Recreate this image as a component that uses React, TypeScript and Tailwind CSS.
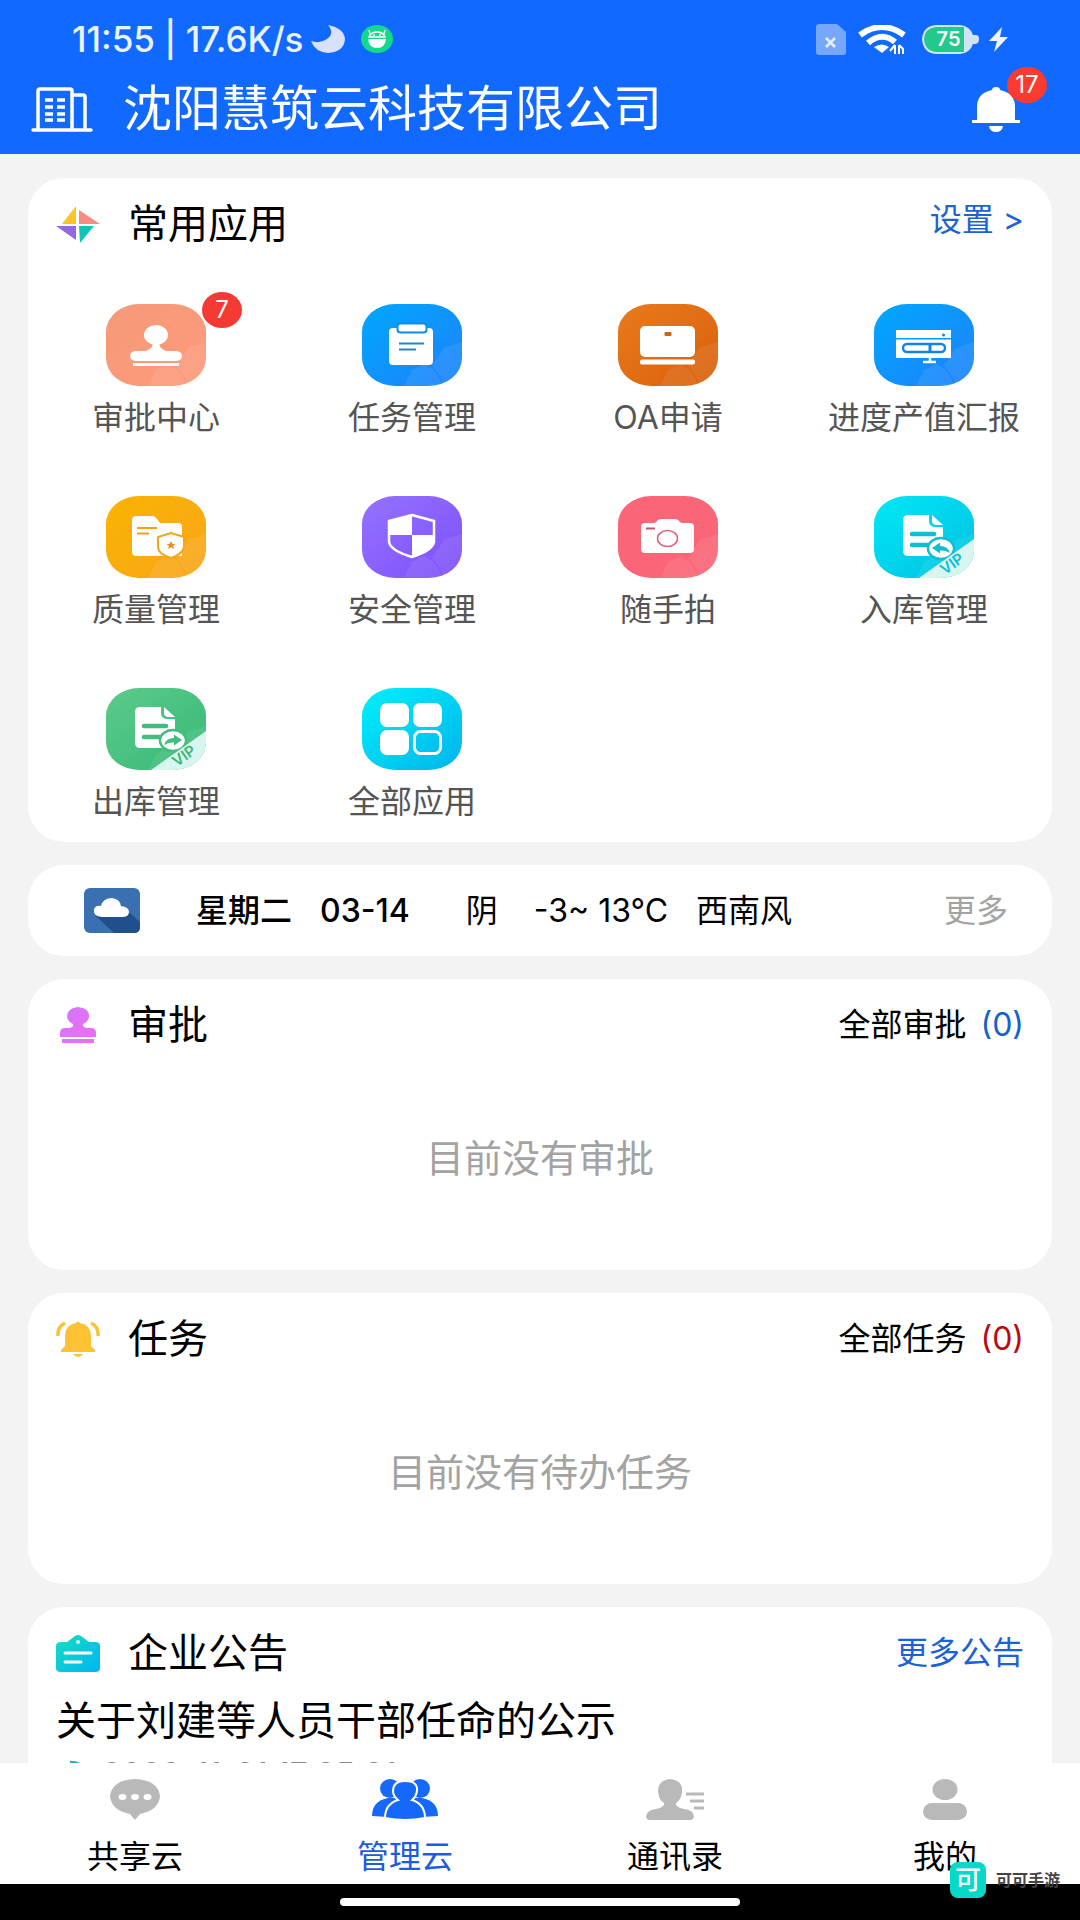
import type { ReactNode } from "react";

const FONT = "font-[Inter,'Noto_Sans_CJK_SC',sans-serif]";

interface AppItem {
  id: string;
  label: string;
  from: string;
  to: string;
  vip?: boolean;
  badge?: number;
  glyph: ReactNode;
}

const docGlyph = (color: string, arrow: string) => (
  <>
    <path d="M34 19H55V25Q55 31 62 31H69V60H34Q29 60 29 55V24Q29 19 34 19Z" fill="#fff" />
    <path d="M58 19L69 29H63Q58 29 58 25Z" fill="#fff" />
    <path d="M38 38H60M38 49H54" stroke={color} strokeWidth="4.500" strokeLinecap="round" />
    <ellipse cx="67" cy="52.500" rx="13" ry="10.500" fill="#fff" stroke={color} strokeWidth="2.500" />
    <path d={arrow} fill={color} />
  </>
);

const apps: AppItem[] = [
  {
    id: "approval",
    label: "审批中心",
    from: "#f59a78",
    to: "#ff9a7c",
    badge: 7,
    glyph: (
      <g fill="#fff">
        <ellipse cx="50" cy="31" rx="12" ry="10" />
        <path d="M46 38H54Q51 43 60 47H71Q76 48 76 52T71 57H29Q24 56 24 52T29 47H40Q49 43 46 38Z" />
        <rect x="27" y="59" width="46" height="3" />
      </g>
    ),
  },
  {
    id: "task",
    label: "任务管理",
    from: "#00a8fc",
    to: "#1f80fc",
    glyph: (
      <>
        <rect x="27" y="24" width="44" height="37" rx="4" fill="#fff" />
        <rect x="35.500" y="19.500" width="29" height="9" rx="3" fill="#fff" stroke="#0890e8" strokeWidth="2" />
        <path d="M37 39.500H62M37 45.500H54" stroke="#1c86d8" strokeWidth="2" />
      </>
    ),
  },
  {
    id: "oa",
    label: "OA申请",
    from: "#e97a1c",
    to: "#d9600c",
    glyph: (
      <>
        <rect x="22" y="22" width="55" height="31" rx="5" fill="#fff" />
        <rect x="46.500" y="28" width="7" height="4" rx="1" fill="#d9600c" />
        <rect x="22" y="55.500" width="55" height="5" rx="2" fill="#fff" />
      </>
    ),
  },
  {
    id: "progress",
    label: "进度产值汇报",
    from: "#00a8fc",
    to: "#1f80fc",
    glyph: (
      <>
        <rect x="22" y="26" width="55" height="8" fill="#fff" />
        <circle cx="69.500" cy="31" r="1.500" fill="#1684e0" />
        <rect x="22" y="35.500" width="55" height="18.500" fill="#fff" />
        <rect x="29" y="40" width="42" height="8" rx="4" fill="none" stroke="#1284e8" strokeWidth="2.500" />
        <path d="M56 40V48" stroke="#1284e8" strokeWidth="3" />
        <path d="M56 54V58M49 58H62" stroke="#fff" strokeWidth="2.500" />
      </>
    ),
  },
  {
    id: "quality",
    label: "质量管理",
    from: "#f9b400",
    to: "#f9a51c",
    glyph: (
      <>
        <path d="M30 20H46Q49 20 51 23L54 27H72Q76 27 76 31V60H30Q26 60 26 56V24Q26 20 30 20Z" fill="#fff" />
        <path d="M31 32H51M31 37.500H43" stroke="#f5a01c" strokeWidth="2" />
        <path d="M65 37L78 41V51Q77 58 65 62Q52 58 52 51V41Z" fill="#fff" stroke="#f0a818" strokeWidth="2" />
        <path d="M65 45L66.500 48H69.500L67 50L68 53L65 51.300L62 53L63 50L60.500 48H63.500Z" fill="#f28a1c" />
      </>
    ),
  },
  {
    id: "safety",
    label: "安全管理",
    from: "#9572ff",
    to: "#7d50fa",
    glyph: (
      <>
        <path d="M50 19L72 25V46Q70 55 50 61Q29 55 27 46V25Z" fill="none" stroke="#fff" strokeWidth="2.500" />
        <path d="M50 18V39H27V25ZM50 39H72V46Q70 55 50 61Z" fill="#fff" />
      </>
    ),
  },
  {
    id: "snapshot",
    label: "随手拍",
    from: "#fa6478",
    to: "#fa6878",
    glyph: (
      <>
        <path d="M27 27H34Q38 27 39 25Q40 23 44 23H56Q60 23 61 25Q62 27 66 27H72Q76 27 76 31V53Q76 57 72 57H27Q23 57 23 53V31Q23 27 27 27Z" fill="#fff" />
        <ellipse cx="49.500" cy="42.500" rx="10" ry="8" fill="none" stroke="#e0607a" strokeWidth="1.500" />
        <path d="M28 32.500H37" stroke="#c0566c" strokeWidth="2" />
      </>
    ),
  },
  {
    id: "inbound",
    label: "入库管理",
    from: "#00e8f6",
    to: "#02bfe0",
    vip: true,
    glyph: docGlyph("#10bed2", "M58 52L66 46.500V50Q74 50 76 57Q72 54 66 54.500V57.500Z"),
  },
  {
    id: "outbound",
    label: "出库管理",
    from: "#5bcb8a",
    to: "#38b877",
    vip: true,
    glyph: docGlyph("#43bd7f", "M76 52L68 46.500V50Q60 50 58 57Q62 54 68 54.500V57.500Z"),
  },
  {
    id: "all",
    label: "全部应用",
    from: "#00f0fc",
    to: "#00b4ea",
    glyph: (
      <g fill="#fff">
        <rect x="18" y="15" width="29" height="24" rx="7" />
        <rect x="51" y="15" width="29" height="24" rx="7" />
        <rect x="18" y="42" width="29" height="25" rx="7" />
        <rect x="52.500" y="43.500" width="26" height="22" rx="6" fill="none" stroke="#fff" strokeWidth="3" />
      </g>
    ),
  },
];

function AppTile({ app }: { app: AppItem }) {
  return (
    <svg viewBox="0 0 100 82" className="h-[82px] w-[100px]" aria-hidden="true">
      <defs>
        <linearGradient id={`bg-${app.id}`} x1="0" y1="0" x2="1" y2="1">
          <stop offset="0" stopColor={app.from} />
          <stop offset="1" stopColor={app.to} />
        </linearGradient>
        <clipPath id={`clip-${app.id}`}>
          <rect width="100" height="82" rx="33" ry="28" />
        </clipPath>
      </defs>
      <g clipPath={`url(#clip-${app.id})`}>
        <rect width="100" height="82" fill={`url(#bg-${app.id})`} />
        {app.id !== "all" && (
          <g fill="#fff" opacity="0.08">
            <path d="M42 82L50 66L62 60L72 66L82 82Z" />
            <path d="M70 62L82 44L100 38V72L86 80Z" />
            <path d="M72 62L90 72L82 80Z" />
          </g>
        )}
        {app.glyph}
        {app.vip && (
          <>
            <path d="M45 82L100 43V82Z" fill="#d8f5f0" />
            <text x="78" y="73" textAnchor="middle" fontSize="15" fontWeight="600" fill={app.to} transform="rotate(-35 78 68)">
              VIP
            </text>
          </>
        )}
      </g>
    </svg>
  );
}

function StatusBar() {
  return (
    <div className="flex h-[78px] items-center justify-between px-[72px]">
      <div className="flex items-center">
        <span className="text-[35px] leading-10 font-medium text-[#e8f3ff]">11:55 | 17.6K/s</span>
        <svg viewBox="0 0 34 28" className="ml-2 h-7 w-[34px]" aria-hidden="true">
          <path d="M17 0Q24 8 16 14Q9 19 0 16Q4 27 17 28Q33 27 34 14Q33 3 17 0Z" fill="#d8e0fb" />
        </svg>
        <svg viewBox="0 0 32 28" className="ml-4 h-7 w-8" aria-hidden="true">
          <ellipse cx="16" cy="14" rx="16" ry="14" fill="#12d98c" />
          <path d="M7 14H25Q24 23 16 23T7 14Z" fill="#fff" />
          <path d="M8 12Q10 7 16 7T24 12ZM9 9L8 5M23 9L24 5" fill="none" stroke="#fff" strokeWidth="1.500" />
          <circle cx="13" cy="10" r="1" fill="#fff" />
          <circle cx="19" cy="10" r="1" fill="#fff" />
        </svg>
      </div>
      <div className="flex items-center">
        <svg viewBox="0 0 30 31" className="h-[31px] w-[30px]" aria-hidden="true">
          <path d="M3 0H21L30 8V28Q30 31 27 31H3Q0 31 0 28V3Q0 0 3 0Z" fill="#76a7fb" />
          <path d="M10 14L19 23M19 14L10 23" stroke="#e6efff" strokeWidth="2.500" />
        </svg>
        <svg viewBox="0 0 48 29" className="ml-3 h-[29px] w-12" aria-hidden="true">
          <path d="M2 10Q24 -6 46 10" fill="none" stroke="#fff" strokeWidth="6" />
          <path d="M10 18Q24 6 37 17" fill="none" stroke="#fff" strokeWidth="6" />
          <path d="M16 22Q24 17 31 22L24 28Z" fill="#fff" />
          <path d="M37 20V29M32 26L37 20M41 29V20M41 20L45 24V29" fill="none" stroke="#fff" strokeWidth="2" />
        </svg>
        <div className="relative ml-4 h-[29px] w-[57px]">
          <svg viewBox="0 0 57 29" className="size-full" aria-hidden="true">
            <path d="M14 0H38Q48 1 51 10H54Q57 10 57 14T54 19H51Q48 28 38 29H14Q1 28 0 14Q1 1 14 0Z" fill="#cfe4f4" />
            <path d="M14 2H42V27H14Q3 26 2 14Q3 3 14 2Z" fill="#22c98a" />
          </svg>
          <span className="absolute inset-0 flex items-center justify-center pr-1 text-[20px] leading-none font-semibold text-white">75</span>
        </div>
        <svg viewBox="0 0 19 25" className="ml-[10px] h-[25px] w-[19px]" aria-hidden="true">
          <path d="M13 0L0 14H8L5 25L19 10H11Z" fill="#eef5ff" />
        </svg>
      </div>
    </div>
  );
}

function BuildingIcon() {
  return (
    <svg viewBox="0 0 62 45" className="h-[45px] w-[62px]" fill="none" stroke="#fff" strokeWidth="3.500" aria-hidden="true">
      <path d="M2 43H60" strokeLinecap="round" />
      <path d="M7 43V4Q7 2 9 2H39Q41 2 41 4V43M41 8H52Q54 8 54 10V43" />
      <path d="M14 13H22M26 13H34M14 20H22M26 20H34M14 27H22M26 27H34M14 33H22M26 33H34" />
    </svg>
  );
}

function Card({ children, className = "" }: { children: ReactNode; className?: string }) {
  return <section className={`shrink-0 rounded-[36px] bg-white ${className}`}>{children}</section>;
}

function CardHeader({ icon, title, action }: { icon: ReactNode; title: string; action: ReactNode }) {
  return (
    <div className="flex h-[92px] items-center pr-7 pl-7">
      <span className="flex w-11 justify-center">{icon}</span>
      <h2 className="ml-7 flex-1 text-[40px] leading-[48px]">{title}</h2>
      {action}
    </div>
  );
}

const pinwheelIcon = (
  <svg viewBox="0 0 44 37" className="h-[37px] w-11" aria-hidden="true">
    <path d="M20 0V18H6Z" fill="#fbc528" />
    <path d="M23 4L44 18H23Z" fill="#f78c80" />
    <path d="M0 20H20V34Z" fill="#9468e4" />
    <path d="M23 20H38L24 37Z" fill="#12c4b8" />
  </svg>
);

const stampIcon = (
  <svg viewBox="0 0 36 36" className="size-9" aria-hidden="true">
    <defs>
      <linearGradient id="stamp" x1="0" y1="0" x2="1" y2="1">
        <stop offset="0" stopColor="#d078fa" />
        <stop offset="1" stopColor="#ee6cf4" />
      </linearGradient>
    </defs>
    <g fill="url(#stamp)">
      <path d="M18 0Q30 1 29 10Q28 15 23 17Q22 20 27 21H31Q36 21 36 26V30H0V26Q0 21 5 21H9Q14 20 13 17Q8 15 7 10Q7 1 18 0Z" />
      <rect x="2" y="32" width="32" height="4" />
    </g>
  </svg>
);

const alarmIcon = (
  <svg viewBox="0 0 44 36" className="h-9 w-11" aria-hidden="true">
    <g fill="#fcc234">
      <path d="M20 2Q22 -1 24 2Q35 4 35 15V25L39 29V31H5V29L9 25V15Q9 4 20 2Z" />
      <path d="M17 33H27Q25 36 22 36T17 33Z" />
    </g>
    <path d="M9 2Q1 6 2 15M35 2Q43 6 42 15" fill="none" stroke="#fcc234" strokeWidth="3.500" />
  </svg>
);

const noticeIcon = (
  <svg viewBox="0 0 44 37" className="h-[37px] w-11" aria-hidden="true">
    <defs>
      <linearGradient id="notice" x1="0" y1="0" x2="1" y2="1">
        <stop offset="0" stopColor="#14e0c0" />
        <stop offset="1" stopColor="#00b4f4" />
      </linearGradient>
    </defs>
    <path d="M5 7H11L19 1Q22 -1 25 1L33 7H39Q44 7 44 11V33Q44 37 39 37H5Q0 37 0 33V11Q0 7 5 7Z" fill="url(#notice)" />
    <path d="M9 18H35M9 27H25" stroke="#fff" strokeWidth="3" strokeLinecap="round" />
    <circle cx="22" cy="7" r="2" fill="#d0fcf8" />
  </svg>
);

const weatherIcon = (
  <svg viewBox="0 0 56 45" className="h-[45px] w-14" aria-hidden="true">
    <rect width="56" height="45" rx="6" fill="#3a6fb0" />
    <path d="M12 28L30 45H50Q56 45 56 39V34L36 16Z" fill="#1f508c" />
    <path d="M18 29Q9 28 10 22Q11 17 17 18Q19 10 28 10Q36 11 37 18Q45 19 45 24Q45 29 38 29Z" fill="#fff" />
  </svg>
);

interface TabItem {
  label: string;
  active?: boolean;
  icon: ReactNode;
}

const tabs: TabItem[] = [
  {
    label: "共享云",
    icon: (
      <svg viewBox="0 0 50 41" className="h-[41px]" aria-hidden="true">
        <path d="M25 0Q48 1 50 17Q49 31 30 35L25 41L20 35Q1 31 0 17Q2 1 25 0Z" fill="#b9b9b9" />
        <g fill="#fff">
          <ellipse cx="12.500" cy="18" rx="4" ry="3" />
          <ellipse cx="25" cy="18" rx="4" ry="3" />
          <ellipse cx="37.500" cy="18" rx="4" ry="3" />
        </g>
      </svg>
    ),
  },
  {
    label: "管理云",
    active: true,
    icon: (
      <svg viewBox="0 0 66 41" className="h-[41px]" fill="#1668fb" aria-hidden="true">
        <ellipse cx="18" cy="9.500" rx="10" ry="9.500" />
        <ellipse cx="48" cy="9.500" rx="10" ry="9.500" />
        <path d="M0 37Q0 22 16 19H50Q66 22 66 37L50 38H16Z" />
        <path d="M33 2Q46 2 45 12Q44 18 40 21Q53 25 53 39Q33 43 13 39Q13 25 26 21Q21 17 21 12Q21 2 33 2Z" stroke="#fff" strokeWidth="2" />
      </svg>
    ),
  },
  {
    label: "通讯录",
    icon: (
      <svg viewBox="0 0 58 41" className="h-[41px]" fill="#b9b9b9" aria-hidden="true">
        <path d="M24 0Q37 1 36 13Q35 21 30 24Q29 28 38 30Q47 31 48 37Q48 41 44 41H4Q0 41 0 37Q1 31 10 30Q19 28 18 24Q13 21 12 13Q12 1 24 0Z" />
        <path d="M40 15H58M44 22H58M48 29H58" stroke="#b9b9b9" strokeWidth="3" />
      </svg>
    ),
  },
  {
    label: "我的",
    icon: (
      <svg viewBox="0 0 44 41" className="h-[41px]" fill="#b9b9b9" aria-hidden="true">
        <ellipse cx="22" cy="10.500" rx="12.500" ry="10.500" />
        <rect y="24" width="44" height="17" rx="9" />
      </svg>
    ),
  },
];

export default function App() {
  return (
    <div className={`relative flex h-screen flex-col overflow-hidden bg-[#f3f3f3] text-black ${FONT}`}>
      <header className="shrink-0 bg-[#1269ff] pb-[14px] text-white">
        <StatusBar />
        <div className="flex h-[62px] items-center pr-[60px] pl-[31px]">
          <BuildingIcon />
          <h1 className="ml-[30px] flex-1 text-[49px] leading-[60px]">沈阳慧筑云科技有限公司</h1>
          <button type="button" aria-label="消息" className="relative">
            <svg viewBox="0 0 48 45" className="h-[45px] w-12" fill="#fff" aria-hidden="true">
              <path d="M20 3Q20 0 24 0T28 3Q43 6 43 20V33H48V36H0V33H5V20Q5 6 20 3Z" />
              <path d="M17 39H31Q30 45 24 45T17 39Z" />
            </svg>
            <span className="absolute -top-5 left-[35px] flex h-9 w-10 items-center justify-center rounded-[50%] bg-[#fb3b30] text-[24px] leading-none">
              17
            </span>
          </button>
        </div>
      </header>

      <main className="flex min-h-0 flex-1 flex-col gap-[23px] overflow-hidden px-7 pt-6">
        <Card className="pb-5">
          <CardHeader
            icon={pinwheelIcon}
            title="常用应用"
            action={<a href="#settings" className="pb-2 text-[32px] leading-10 text-[#1a62d6]">设置 &gt;</a>}
          />
          <div className="mt-[34px] grid grid-cols-4 gap-y-[58px]">
            {apps.map((app) => (
              <a key={app.id} href={`#${app.id}`} className="flex flex-col items-center gap-3 whitespace-nowrap text-[#555]">
                <span className="relative">
                  <AppTile app={app} />
                  {app.badge && (
                    <span className="absolute -top-3 -right-9 flex h-9 w-10 items-center justify-center rounded-[50%] bg-[#f43a32] text-[24px] leading-none text-white">
                      {app.badge}
                    </span>
                  )}
                </span>
                <span className="text-[32px] leading-10">{app.label}</span>
              </a>
            ))}
          </div>
        </Card>

        <Card className="flex h-[91px] items-center pr-11 pl-14 text-[32px] leading-10 whitespace-nowrap">
          {weatherIcon}
          <span className="ml-14 font-medium">星期二</span>
          <span className="ml-7 font-medium">03-14</span>
          <span className="ml-14">阴</span>
          <span className="ml-9">-3~ 13°C</span>
          <span className="ml-7 flex-1">西南风</span>
          <a href="#weather" className="text-[#a3a3a3]">更多</a>
        </Card>

        <Card className="flex h-[291px] flex-col">
          <CardHeader
            icon={stampIcon}
            title="审批"
            action={
              <a href="#approvals" className="flex gap-[14px] text-[32px] leading-10">
                全部审批<span className="text-[#1262cc]">(0)</span>
              </a>
            }
          />
          <p className="flex flex-1 items-center justify-center pb-6 text-[38px] text-[#a3a3a3]">目前没有审批</p>
        </Card>

        <Card className="flex h-[291px] flex-col">
          <CardHeader
            icon={alarmIcon}
            title="任务"
            action={
              <a href="#tasks" className="flex gap-[14px] text-[32px] leading-10">
                全部任务<span className="text-[#b80a10]">(0)</span>
              </a>
            }
          />
          <p className="flex flex-1 items-center justify-center pb-6 text-[38px] text-[#a3a3a3]">目前没有待办任务</p>
        </Card>

        <Card className="pb-6">
          <CardHeader
            icon={noticeIcon}
            title="企业公告"
            action={<a href="#notices" className="text-[32px] leading-10 text-[#1a62d6]">更多公告</a>}
          />
          <div className="px-7">
            <h3 className="text-[40px] leading-[44px]">关于刘建等人员干部任命的公示</h3>
            <div className="mt-3 flex items-center text-[32px] leading-10 text-[#888]">
              <svg viewBox="0 0 30 30" className="mr-4 size-[30px]" fill="none" stroke="#23b5ac" strokeWidth="2.500" aria-hidden="true">
                <path d="M14 4V14M14 2Q24 2 28 8M5 5L2 9Q-1 18 5 24Q14 32 24 25Q29 20 28 14" />
              </svg>
              <time>2022-11-21 17:25:21</time>
            </div>
          </div>
        </Card>
      </main>

      <nav className="grid shrink-0 grid-cols-4 bg-white pt-4 pb-[7px]">
        {tabs.map((tab) => (
          <button key={tab.label} type="button" className={`flex flex-col items-center gap-[17px] ${tab.active ? "text-[#1d5be0]" : ""}`}>
            {tab.icon}
            <span className="text-[32px] leading-10">{tab.label}</span>
          </button>
        ))}
      </nav>

      <div className="flex h-9 shrink-0 items-center justify-center bg-black">
        <div className="h-2 w-[37%] rounded-full bg-white" />
      </div>

      {/* floating brand mark */}
      <div className="absolute right-5 bottom-[22px] flex items-center gap-[10px]">
        <span className="flex size-9 items-center justify-center rounded-lg bg-[#06d9c8] text-[26px] leading-none font-medium text-white">可</span>
        <span className="text-base leading-5 font-bold text-[#444]">可可手游</span>
      </div>
    </div>
  );
}
